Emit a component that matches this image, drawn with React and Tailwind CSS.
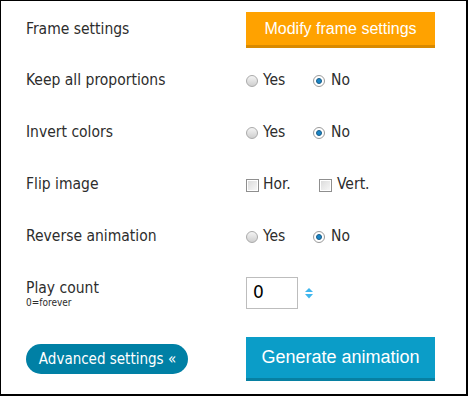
const Radio = ({ checked }) =>
  checked ? (
    <span className="w-[12px] h-[12px] rounded-full border border-[#9a9a9a] bg-white flex items-center justify-center shrink-0">
      <span className="w-[6px] h-[6px] rounded-full bg-[#1a86c8] border border-[#1b5c86]" />
    </span>
  ) : (
    <span className="w-[12px] h-[12px] rounded-full border border-[#aaaaaa] bg-gradient-to-b from-[#f4f4f4] to-[#cfcfcf] shrink-0" />
  );

const Checkbox = () => (
  <span className="w-[13px] h-[13px] border border-[#8f8f8f] bg-white p-[1px] shrink-0 flex">
    <span className="flex-1 bg-gradient-to-br from-[#dcdcdc] to-[#f6f6f6]" />
  </span>
);

const YesNo = () => (
  <div className="flex items-center">
    <label className="flex items-center gap-[5px] w-[67px]">
      <Radio />
      <span>Yes</span>
    </label>
    <label className="flex items-center gap-[6px]">
      <Radio checked />
      <span>No</span>
    </label>
  </div>
);

const Row = ({ label, h = "h-[52px]", children }) => (
  <div className={`flex items-center ${h}`}>
    <div className="w-[220px] shrink-0">{label}</div>
    <div>{children}</div>
  </div>
);

export default function App() {
  return (
    <div className="w-[468px] h-[396px] bg-white border border-black border-r-2 border-b-2 pl-[25px] pt-[4px] text-[15.5px] text-[#2d2d2d] font-['DejaVu_Sans_Condensed','DejaVu_Sans',sans-serif]">
      <Row label="Frame settings" h="h-[50px]">
        <button className="w-[189px] h-[36px] bg-[#ffa200] border-b-[3px] border-[#d98a00] text-white text-[16px] font-['Liberation_Sans',Arial,sans-serif]">
          Modify frame settings
        </button>
      </Row>
      <Row label="Keep all proportions">
        <YesNo />
      </Row>
      <Row label="Invert colors">
        <YesNo />
      </Row>
      <Row label="Flip image">
        <div className="flex items-center">
          <label className="flex items-center gap-[4px] w-[73px]">
            <Checkbox />
            <span>Hor.</span>
          </label>
          <label className="flex items-center gap-[5px]">
            <Checkbox />
            <span>Vert.</span>
          </label>
        </div>
      </Row>
      <Row label="Reverse animation">
        <YesNo />
      </Row>
      <Row
        h="h-[60px]"
        label={
          <div className="flex flex-col">
            <span className="leading-[18px]">Play count</span>
            <span className="text-[10px] leading-[11px]">0=forever</span>
          </div>
        }
      >
        <div className="flex items-center gap-[7px]">
          <div className="w-[52px] h-[32px] border border-[#bdbdbd] flex items-center pl-[6px] text-[17px] text-black font-['DejaVu_Sans',sans-serif]">
            0
          </div>
          <svg width="8" height="11" viewBox="0 0 8 11">
            <path d="M4 0 L8 4 L0 4 Z" fill="#3fb6ee" />
            <path d="M0 6 L8 6 L4 10.5 Z" fill="#3fb6ee" />
          </svg>
        </div>
      </Row>
      <div className="flex items-center mt-[14px]">
        <div className="w-[220px] shrink-0">
          <button className="h-[30px] w-[162px] rounded-full bg-[#0080a5] text-white text-[15px] pl-[1px]">
            Advanced settings «
          </button>
        </div>
        <button className="w-[189px] h-[44px] bg-[#0b9dc8] border-b-[3px] border-[#0780a2] text-white text-[18px] font-['Liberation_Sans',Arial,sans-serif]">
          Generate animation
        </button>
      </div>
    </div>
  );
}
